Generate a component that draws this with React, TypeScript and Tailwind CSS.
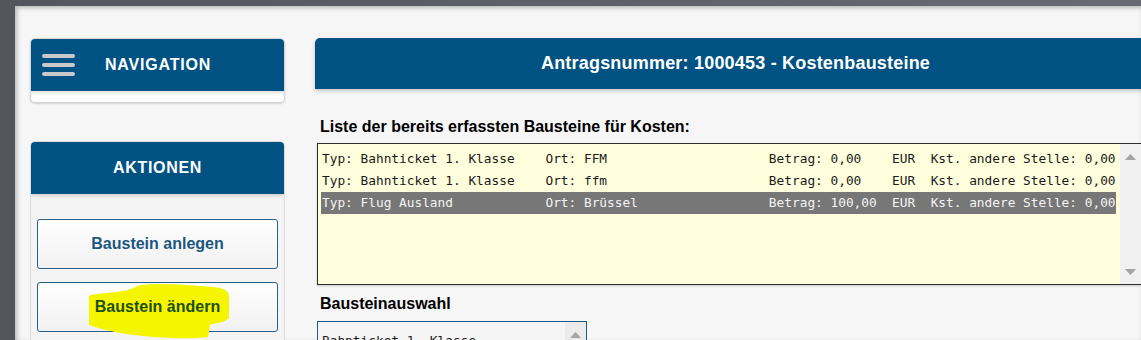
import React from "react";

// ── Data ───────────────────────────────────────────────────────────────────

const rows = [
    { typ: "Bahnticket 1. Klasse", ort: "FFM", betrag: "0,00", kst: "0,00" },
    { typ: "Bahnticket 1. Klasse", ort: "ffm", betrag: "0,00", kst: "0,00" },
    { typ: "Flug Ausland", ort: "Brüssel", betrag: "100,00", kst: "0,00", selected: true },
];

function line(r: (typeof rows)[number]) {
    const typ = ("Typ: " + r.typ).padEnd(29, " ");
    const ort = ("Ort: " + r.ort).padEnd(29, " ");
    const betrag = ("Betrag: " + r.betrag).padEnd(16, " ");
    return `${typ}${ort}${betrag}EUR  Kst. andere Stelle: ${r.kst}`;
}

// ── Pieces ─────────────────────────────────────────────────────────────────

function Hamburger() {
    return (
        <div className="flex flex-col gap-[5px]">
            <span className="block h-[4px] w-[33px] rounded-full bg-[#c9c9c9]" />
            <span className="block h-[4px] w-[33px] rounded-full bg-[#c9c9c9]" />
            <span className="block h-[4px] w-[33px] rounded-full bg-[#c9c9c9]" />
        </div>
    );
}

function ArrowUp() {
    return (
        <svg width="11" height="6" viewBox="0 0 11 6">
            <path d="M0 6 L5.5 0 L11 6 Z" fill="#a3a3a3" />
        </svg>
    );
}

function ArrowDown() {
    return (
        <svg width="11" height="6" viewBox="0 0 11 6">
            <path d="M0 0 L5.5 6 L11 0 Z" fill="#a3a3a3" />
        </svg>
    );
}

function ActionButton({ label, marked }: { label: string; marked?: boolean }) {
    return (
        <div className="relative flex h-[50px] items-center justify-center rounded-[3px] border border-[#2b5f86] bg-gradient-to-b from-white to-[#f1f1f1]">
            {/* highlighter scribble */}
            {marked && (
                <svg className="absolute left-0 top-0 z-0" width="241" height="60" viewBox="0 0 241 60">
                    <path
                        d="M51 13 C58 9 88 11 99 3 C112 -1 150 2 176 4 C186 5 191 8 191 13 L191 35 C186 40 176 40 172 42 L170 54 C150 57 112 54 96 52 C80 50 62 46 51 42 Z"
                        fill="#f5f500"
                    />
                </svg>
            )}
            <span
                className={`relative z-10 text-[16px] font-bold ${
                    marked ? "text-[#1e4f0c]" : "text-[#1d5680]"
                }`}
            >
                {label}
            </span>
        </div>
    );
}

// ── Page ───────────────────────────────────────────────────────────────────

export default function App() {
    return (
        <div
            className="h-[340px] w-[1141px] overflow-hidden bg-gradient-to-r from-[#55555e] to-[#6a6a72] pl-[15px] pt-[6px]"
            style={{ fontFamily: '"Liberation Sans", Arial, sans-serif' }}
        >
            <div className="flex h-full gap-[30px] bg-[#f6f6f6] pl-[15px] pt-[32px] shadow-[inset_2px_2px_4px_rgba(0,0,0,0.25)]">
                {/* Sidebar */}
                <aside className="w-[255px] shrink-0">
                    <div className="overflow-hidden rounded-[5px] border border-[#d6d6d6] bg-white shadow-[0_1px_2px_rgba(0,0,0,0.15)]">
                        <div className="flex h-[52px] items-center bg-[#005282] pl-[11px]">
                            <Hamburger />
                            <span className="ml-[30px] text-[16px] font-bold tracking-[0.8px] text-white">
                                NAVIGATION
                            </span>
                        </div>
                        <div className="h-[11px] bg-white shadow-[inset_0_2px_3px_rgba(0,0,0,0.12)]" />
                    </div>

                    <div className="mt-[38px] overflow-hidden rounded-t-[5px] border border-[#dadada] bg-[#f4f4f4]">
                        <div className="flex h-[52px] items-center justify-center bg-[#005282] shadow-[0_2px_3px_rgba(0,0,0,0.15)]">
                            <span className="text-[16px] font-bold tracking-[0.7px] text-white">AKTIONEN</span>
                        </div>
                        <div className="flex flex-col gap-[13px] px-[6px] pt-[25px] pb-4">
                            <ActionButton label="Baustein anlegen" />
                            <ActionButton label="Baustein ändern" marked />
                        </div>
                    </div>
                </aside>

                {/* Main */}
                <main className="w-[841px] shrink-0">
                    <div className="flex h-[51px] items-center justify-center rounded-t-[5px] bg-[#005282] shadow-[0_2px_4px_rgba(0,0,0,0.2)]">
                        <span className="text-[18px] font-bold tracking-[0.2px] text-white">
                            Antragsnummer: 1000453 - Kostenbausteine
                        </span>
                    </div>

                    <div className="mt-[29px] pl-[5px] text-[16px] font-bold leading-[18px] text-black">
                        Liste der bereits erfassten Bausteine für Kosten:
                    </div>

                    <div className="ml-[2px] mt-[7px] flex h-[142px] w-[824px] border border-r-0 border-[#2e2e2e] bg-[#ffffdd] shadow-[0_1px_2px_rgba(0,0,0,0.2)]">
                        <div
                            className="flex-1 pl-[3px] pr-[4px] pt-[4px] text-[12.8px]"
                            style={{ fontFamily: '"DejaVu Sans Mono", "Liberation Mono", monospace' }}
                        >
                            {rows.map((r, i) => (
                                <div
                                    key={i}
                                    className={`flex h-[22px] items-center whitespace-pre pl-[1px] ${
                                        r.selected ? "bg-[#777777] text-[#f4f4f4]" : "text-[#1a1a1a]"
                                    }`}
                                >
                                    {line(r)}
                                </div>
                            ))}
                        </div>
                        <div className="flex w-[21px] flex-col items-center justify-between bg-[#f0f0f0] pt-[10px] pb-[9px]">
                            <ArrowUp />
                            <ArrowDown />
                        </div>
                    </div>

                    <div className="mt-[10px] pl-[5px] text-[16px] font-bold leading-[18px] text-black">
                        Bausteinauswahl
                    </div>

                    <div className="ml-[2px] mt-[8px] flex h-[40px] w-[270px] border border-[#1c5a86] bg-[#f5f5f5]">
                        <div
                            className="flex-1 pl-[4px] pt-[9px] text-[12.8px] text-[#1a1a1a]"
                            style={{ fontFamily: '"DejaVu Sans Mono", "Liberation Mono", monospace' }}
                        >
                            Bahnticket 1. Klasse
                        </div>
                        <div className="flex w-[21px] flex-col items-center bg-[#ebebeb] pt-[10px]">
                            <ArrowUp />
                        </div>
                    </div>
                </main>
            </div>
        </div>
    );
}
